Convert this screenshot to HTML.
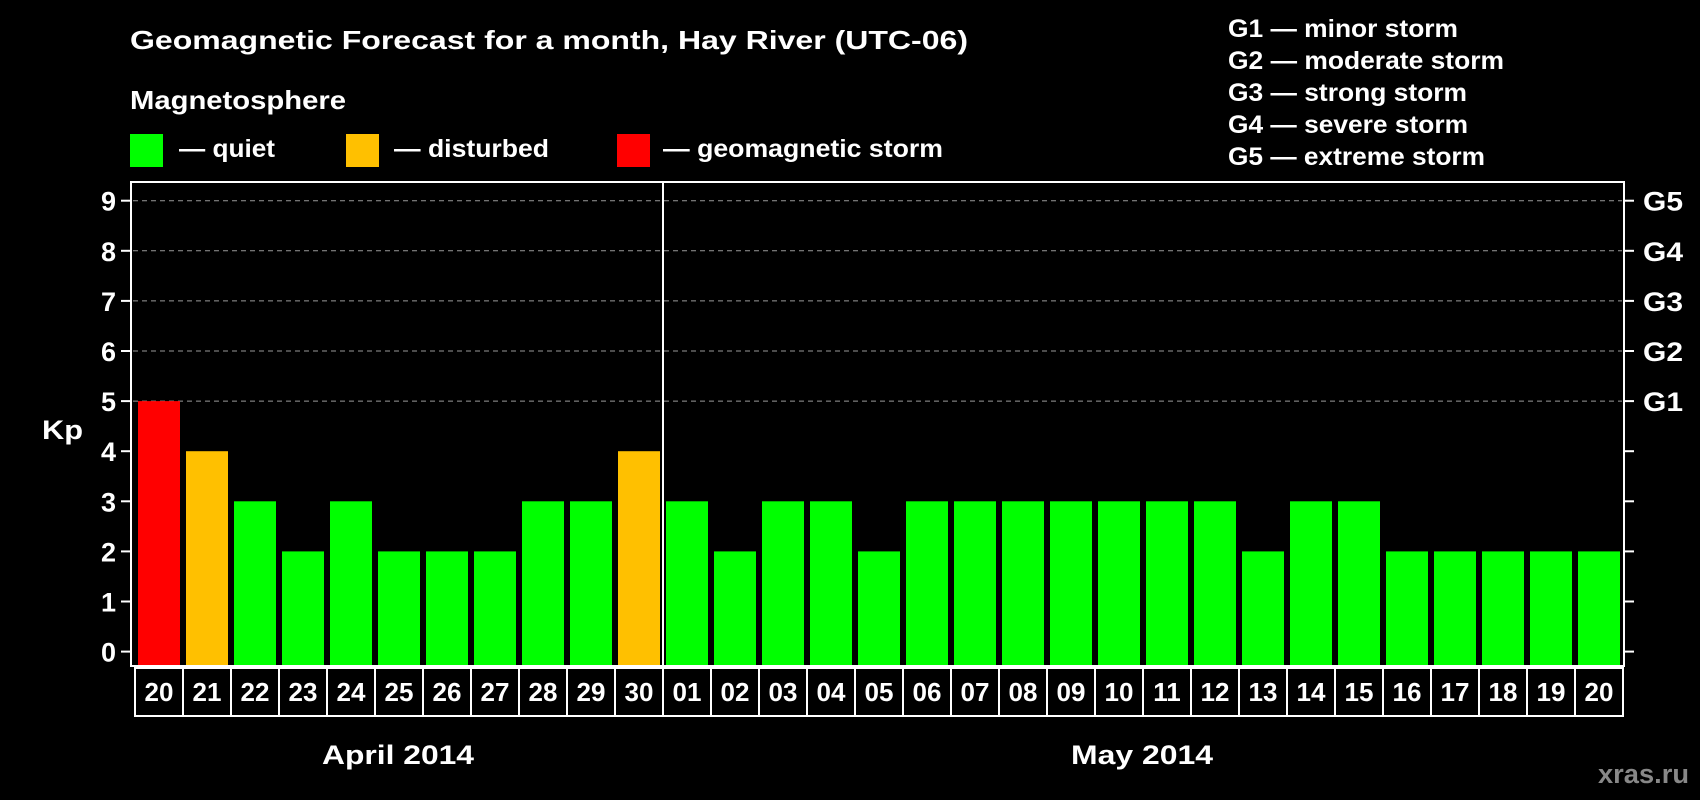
<!DOCTYPE html>
<html><head><meta charset="utf-8"><style>
html,body{margin:0;padding:0;background:#000;width:1700px;height:800px;overflow:hidden}
svg text{font-family:"Liberation Sans",Arial,sans-serif;font-weight:bold;fill:#fff}
</style></head><body>
<svg width="1700" height="800" xmlns="http://www.w3.org/2000/svg">
<rect width="1700" height="800" fill="#000"/>
<text x="130" y="49" font-size="26" textLength="838" lengthAdjust="spacingAndGlyphs">Geomagnetic Forecast for a month, Hay River (UTC-06)</text>
<text x="130" y="109" font-size="26" textLength="216" lengthAdjust="spacingAndGlyphs">Magnetosphere</text>
<rect x="130" y="134" width="33" height="33" fill="#00ff00"/>
<text x="179" y="157" font-size="25" textLength="96" lengthAdjust="spacingAndGlyphs">— quiet</text>
<rect x="346" y="134" width="33" height="33" fill="#ffc000"/>
<text x="394" y="157" font-size="25" textLength="155" lengthAdjust="spacingAndGlyphs">— disturbed</text>
<rect x="617" y="134" width="33" height="33" fill="#ff0000"/>
<text x="663" y="157" font-size="25" textLength="280" lengthAdjust="spacingAndGlyphs">— geomagnetic storm</text>
<g font-size="25">
<text x="1228" y="37" textLength="230" lengthAdjust="spacingAndGlyphs">G1 — minor storm</text>
<text x="1228" y="69" textLength="276" lengthAdjust="spacingAndGlyphs">G2 — moderate storm</text>
<text x="1228" y="101" textLength="239" lengthAdjust="spacingAndGlyphs">G3 — strong storm</text>
<text x="1228" y="133" textLength="240" lengthAdjust="spacingAndGlyphs">G4 — severe storm</text>
<text x="1228" y="165" textLength="257" lengthAdjust="spacingAndGlyphs">G5 — extreme storm</text>
</g>
<g id="grid" stroke="#999" stroke-width="1" stroke-dasharray="5,4"></g>
<g id="bars"></g>
<line x1="663" x2="663" y1="182" y2="666" stroke="#fff" stroke-width="2"/>
<rect x="131" y="182" width="1493" height="484" fill="none" stroke="#fff" stroke-width="2"/>
<g id="ticks" stroke="#fff" stroke-width="2"></g>
<g id="ylab" font-size="27"></g>
<text x="42" y="439" font-size="27" textLength="41" lengthAdjust="spacingAndGlyphs">Kp</text>
<g id="cells"></g>
<text x="322" y="764" font-size="27" textLength="152" lengthAdjust="spacingAndGlyphs">April 2014</text>
<text x="1071" y="764" font-size="27" textLength="142" lengthAdjust="spacingAndGlyphs">May 2014</text>
<text x="1598" y="783" font-size="27" textLength="91" lengthAdjust="spacingAndGlyphs" style="fill:#888">xras.ru</text>
</svg>
<script>
(function(){
var ns="http://www.w3.org/2000/svg";
function el(t,a,p,txt){var e=document.createElementNS(ns,t);for(var k in a)e.setAttribute(k,a[k]);if(txt!=null)e.textContent=txt;document.getElementById(p).appendChild(e);}
var v=[5,4,3,2,3,2,2,2,3,3,4,3,2,3,3,2,3,3,3,3,3,3,3,2,3,3,2,2,2,2,2];
var d=["20","21","22","23","24","25","26","27","28","29","30","01","02","03","04","05","06","07","08","09","10","11","12","13","14","15","16","17","18","19","20"];
var Y0=651.6,S=50.1;
for(var i=0;i<31;i++){
 var c=v[i]>=5?"#ff0000":(v[i]==4?"#ffc000":"#00ff00");
 var ty=Y0-v[i]*S;
 el("rect",{x:138+i*48,y:ty,width:42,height:665-ty,fill:c},"bars");
 el("rect",{x:135+i*48,y:668,width:48,height:48,fill:"none",stroke:"#fff","stroke-width":2},"cells");
 el("text",{x:159+i*48,y:701,"font-size":26,"text-anchor":"middle"},"cells",d[i]);
}
var G=["","","","","","G1","G2","G3","G4","G5"];
for(var k=0;k<=9;k++){
 var y=Y0-k*S;
 if(k>=5)el("line",{x1:133,x2:1622,y1:y,y2:y},"grid");
 el("line",{x1:121,x2:131,y1:y,y2:y},"ticks");
 el("line",{x1:1624,x2:1634,y1:y,y2:y},"ticks");
 el("text",{x:116,y:y+10,"text-anchor":"end"},"ylab",String(k));
 if(G[k])el("text",{x:1643,y:y+10,textLength:40,lengthAdjust:"spacingAndGlyphs"},"ylab",G[k]);
}
})();
</script>
</body></html>
